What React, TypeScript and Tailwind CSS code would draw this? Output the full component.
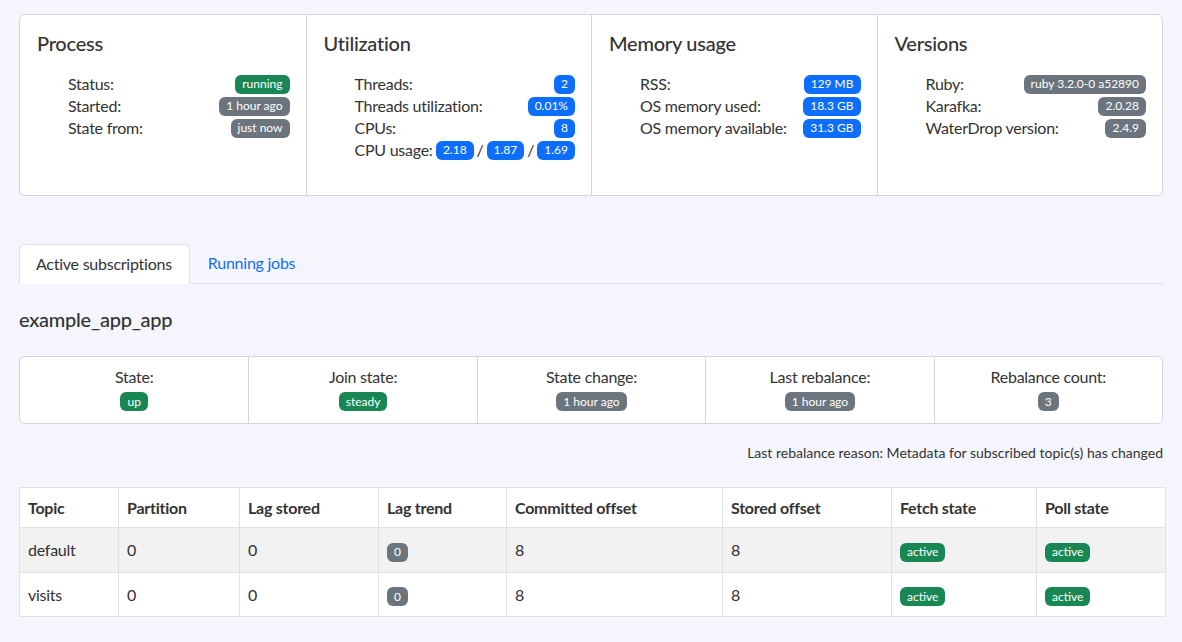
import React from "react"

type Tone = "green" | "gray" | "blue"

const toneClass: Record<Tone, string> = {
    green: "bg-[#198754]",
    gray: "bg-[#6c757d]",
    blue: "bg-[#0d6efd]",
}

function Badge({ tone, children }: { tone: Tone; children: React.ReactNode }) {
    return (
        <span className={`inline-flex h-[19px] shrink-0 items-center whitespace-nowrap rounded-[6px] px-[7px] text-[12px] leading-none tracking-normal text-white ${toneClass[tone]}`}>
            {children}
        </span>
    )
}

type Row = { label: string; value: React.ReactNode }

function InfoColumn({ title, rows, first }: { title: string; rows: Row[]; first?: boolean }) {
    return (
        <div className={`pl-[17px] pr-4 pt-[16px] ${first ? "" : "border-l border-[#d6d6d6]"}`}>
            <h5 className="text-[20px] font-medium leading-[24px]">{title}</h5>
            <ul className="mt-[18px] pl-[31px]">
                {rows.map((r) => (
                    <li key={r.label} className="flex h-[22px] items-center justify-between gap-[3px]">
                        <span className="whitespace-nowrap">{r.label}</span>
                        {r.value}
                    </li>
                ))}
            </ul>
        </div>
    )
}

const cpu = (
    <span className="flex shrink-0 items-center gap-[3px]">
        <Badge tone="blue">2.18</Badge>
        <span>/</span>
        <Badge tone="blue">1.87</Badge>
        <span>/</span>
        <Badge tone="blue">1.69</Badge>
    </span>
)

const stats = [
    { label: "State:", value: "up", tone: "green" as Tone },
    { label: "Join state:", value: "steady", tone: "green" as Tone },
    { label: "State change:", value: "1 hour ago", tone: "gray" as Tone },
    { label: "Last rebalance:", value: "1 hour ago", tone: "gray" as Tone },
    { label: "Rebalance count:", value: "3", tone: "gray" as Tone },
]

const columns = [
    { name: "Topic", w: "w-[99px]" },
    { name: "Partition", w: "w-[121px]" },
    { name: "Lag stored", w: "w-[139px]" },
    { name: "Lag trend", w: "w-[128px]" },
    { name: "Committed offset", w: "w-[216px]" },
    { name: "Stored offset", w: "w-[169px]" },
    { name: "Fetch state", w: "w-[145px]" },
    { name: "Poll state", w: "w-[129px]" },
]

const partitions = [
    { topic: "default", striped: true, h: "h-[45px]" },
    { topic: "visits", striped: false, h: "h-[44px]" },
]

export default function App() {
    return (
        <div className="min-h-screen bg-[#f5f6fd] px-[19px] pt-[14px] pb-6 text-[16px] leading-[24px] tracking-[-0.25px] text-[#333333] [font-family:Lato,'Noto_Sans',sans-serif]">
            {/* process overview */}
            <div className="grid h-[182px] grid-cols-4 rounded-[6px] border border-[#d6d6d6] bg-white">
                <InfoColumn
                    first
                    title="Process"
                    rows={[
                        { label: "Status:", value: <Badge tone="green">running</Badge> },
                        { label: "Started:", value: <Badge tone="gray">1 hour ago</Badge> },
                        { label: "State from:", value: <Badge tone="gray">just now</Badge> },
                    ]}
                />
                <InfoColumn
                    title="Utilization"
                    rows={[
                        { label: "Threads:", value: <Badge tone="blue">2</Badge> },
                        { label: "Threads utilization:", value: <Badge tone="blue">0.01%</Badge> },
                        { label: "CPUs:", value: <Badge tone="blue">8</Badge> },
                        { label: "CPU usage:", value: cpu },
                    ]}
                />
                <InfoColumn
                    title="Memory usage"
                    rows={[
                        { label: "RSS:", value: <Badge tone="blue">129 MB</Badge> },
                        { label: "OS memory used:", value: <Badge tone="blue">18.3 GB</Badge> },
                        { label: "OS memory available:", value: <Badge tone="blue">31.3 GB</Badge> },
                    ]}
                />
                <InfoColumn
                    title="Versions"
                    rows={[
                        { label: "Ruby:", value: <Badge tone="gray">ruby 3.2.0-0 a52890</Badge> },
                        { label: "Karafka:", value: <Badge tone="gray">2.0.28</Badge> },
                        { label: "WaterDrop version:", value: <Badge tone="gray">2.4.9</Badge> },
                    ]}
                />
            </div>

            {/* tabs */}
            <div className="mt-[48px] flex border-b border-[#dee2e6]">
                <div className="-mb-px h-[40px] rounded-t-[6px] border border-[#dee2e6] border-b-white bg-white pl-4 pr-[17px] py-[7px]">
                    Active subscriptions
                </div>
                <div className="px-[18px] py-[7px] text-[#0d6efd]">Running jobs</div>
            </div>

            <h4 className="mt-[23px] text-[20px] font-medium leading-[24px]">example_app_app</h4>

            {/* consumer group stats */}
            <div className="mt-[25px] grid h-[68px] grid-cols-5 rounded-[6px] border border-[#d6d6d6] bg-white">
                {stats.map((s, i) => (
                    <div key={s.label} className={`flex flex-col items-center pt-[8px] ${i > 0 ? "border-l border-[#d6d6d6]" : ""}`}>
                        <span className="leading-[24px]">{s.label}</span>
                        <div className="mt-[3px] flex">
                            <Badge tone={s.tone}>{s.value}</Badge>
                        </div>
                    </div>
                ))}
            </div>

            <p className="mt-[18px] text-right text-[14px] leading-[21px] tracking-normal">
                Last rebalance reason: Metadata for subscribed topic(s) has changed
            </p>

            <table className="mt-[24px] w-full table-fixed border-collapse border border-[#dee2e6] bg-white">
                <thead>
                    <tr className="h-[40px]">
                        {columns.map((c) => (
                            <th key={c.name} className={`${c.w} border border-[#dee2e6] px-2 text-left font-bold`}>
                                {c.name}
                            </th>
                        ))}
                    </tr>
                </thead>
                <tbody>
                    {partitions.map((p) => (
                        <tr key={p.topic} className={`${p.h} ${p.striped ? "bg-[#f2f2f2]" : ""}`}>
                            <td className="border border-[#dee2e6] px-2">{p.topic}</td>
                            <td className="border border-[#dee2e6] px-2">0</td>
                            <td className="border border-[#dee2e6] px-2">0</td>
                            <td className="border border-[#dee2e6] px-2">
                                <Badge tone="gray">0</Badge>
                            </td>
                            <td className="border border-[#dee2e6] px-2">8</td>
                            <td className="border border-[#dee2e6] px-2">8</td>
                            <td className="border border-[#dee2e6] px-2">
                                <Badge tone="green">active</Badge>
                            </td>
                            <td className="border border-[#dee2e6] px-2">
                                <Badge tone="green">active</Badge>
                            </td>
                        </tr>
                    ))}
                </tbody>
            </table>
        </div>
    )
}
